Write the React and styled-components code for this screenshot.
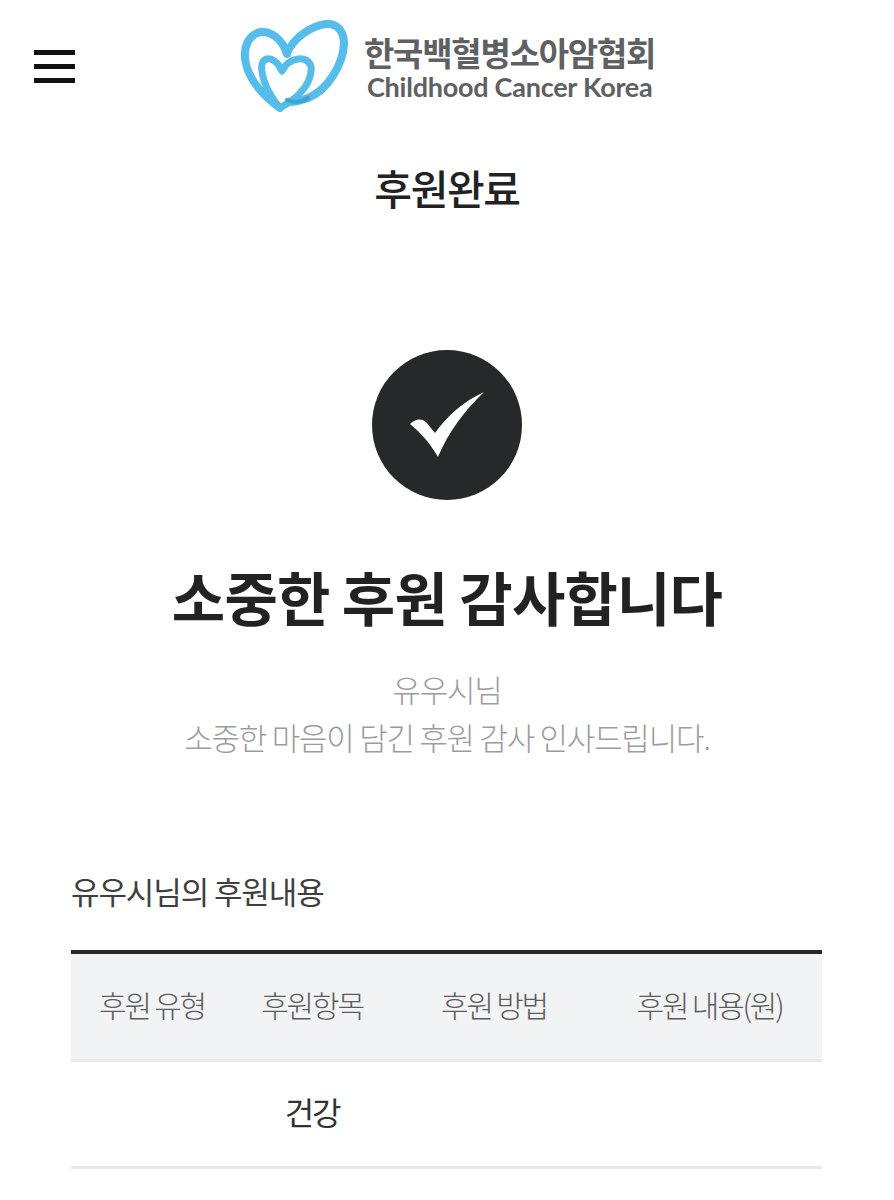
import React from 'react';
import styled, { createGlobalStyle } from 'styled-components';

const GlobalStyle = createGlobalStyle`
  html, body {
    margin: 0;
    padding: 0;
    background: #fff;
  }
  body {
    font-family: "Noto Sans CJK KR", "Noto Sans", sans-serif;
  }
`;

const Page = styled.div`
  width: 894px;
  height: 1200px;
  overflow: hidden;
  background: #fff;
`;

const Header = styled.header`
  display: flex;
  align-items: flex-start;
  height: 157px;
  padding: 20px 0 0 34px;
  box-sizing: border-box;
`;

const Burger = styled.button`
  display: flex;
  flex-direction: column;
  gap: 9px;
  width: 41px;
  margin-top: 30px;
  padding: 0;
  border: 0;
  background: none;
  span {
    display: block;
    height: 5px;
    background: #111;
  }
`;

const Logo = styled.div`
  display: flex;
  align-items: flex-start;
  margin-left: 165px;
`;

const LogoText = styled.div`
  display: flex;
  flex-direction: column;
  margin: 13px 0 0 14px;
  color: #5f6062;
  white-space: nowrap;
`;

const LogoKorean = styled.div`
  font-size: 33px;
  line-height: 38px;
  font-weight: 700;
  letter-spacing: -1.25px;
`;

const LogoEnglish = styled.div`
  margin-left: 3px;
  font-family: "Lato", "Noto Sans", sans-serif;
  font-size: 27px;
  line-height: 32px;
  font-weight: 700;
  letter-spacing: -0.25px;
`;

const PageTitle = styled.h1`
  margin: 0;
  height: 60px;
  text-align: center;
  color: #222;
  font-size: 41px;
  line-height: 60px;
  font-weight: 500;
  letter-spacing: -1.4px;
`;

const Hero = styled.section`
  display: flex;
  flex-direction: column;
  align-items: center;
  padding-top: 133px;
`;

const CheckCircle = styled.div`
  display: flex;
  align-items: center;
  justify-content: center;
  width: 150px;
  height: 150px;
  border-radius: 50%;
  background: #27282a;
`;

const Thanks = styled.h2`
  margin: 55px 0 0;
  color: #222;
  font-size: 58px;
  line-height: 82px;
  font-weight: 700;
  letter-spacing: -0.8px;
`;

const Message = styled.p`
  margin: 28px 0 0;
  text-align: center;
  color: #9c9c9c;
  font-size: 31px;
  line-height: 48px;
  font-weight: 300;
  letter-spacing: -1.25px;
`;

const Section = styled.section`
  padding: 0 72px 0 71px;
  margin-top: 107px;
`;

const SectionTitle = styled.h3`
  margin: 0 0 36px;
  color: #3f3f3f;
  font-size: 31px;
  line-height: 46px;
  font-weight: 400;
  letter-spacing: -1.1px;
`;

const Table = styled.div`
  border-top: 4px solid #27282a;
`;

const Row = styled.div`
  display: grid;
  grid-template-columns: 162px 158px 206px 225px;
  align-items: center;
  height: ${props => props.$height}px;
  padding-bottom: 6px;
  box-sizing: border-box;
  border-bottom: 3px solid #e9e9eb;
  background: ${props => props.$head ? '#f2f3f5' : '#fff'};
`;

const Cell = styled.div`
  text-align: center;
  white-space: nowrap;
  color: ${props => props.$head ? '#5c5c5c' : '#333'};
  font-size: ${props => props.$head ? 30 : 32}px;
  font-weight: ${props => props.$head ? 300 : 400};
  line-height: 40px;
  letter-spacing: -2.2px;
`;

const HeartLogo = () => (
  <svg width="110" height="92" viewBox="0 0 110 92" fill="none">
    <g stroke="#56bdea" strokeLinecap="round" strokeLinejoin="round">
      <path d="M47 34 C42 18 30 11 21 12 C9 14 4 26 5 38 C7 60 26 78 40 88" strokeWidth="8" />
      <path d="M47 33 C54 18 70 6 86 4 C98 3 104 12 104 24 C103 44 88 70 68 78 C62 80 57 82 50 82" strokeWidth="8" />
      <path
        d="M42 51 C38 42 32 38 27 39 C22 40 21 46 22 52 C24 65 32 79 40 88 C47 84 56 78 60 73 C68 65 72 55 71 47 C70 41 64 38 58 39 C50 40 45 45 42 51 Z"
        strokeWidth="7"
      />
    </g>
    <path d="M47 80 C55 83 62 82 68 78" stroke="#3aa5cf" strokeWidth="4" strokeLinecap="round" />
  </svg>
);

const CheckMark = () => (
  <svg width="76" height="68" viewBox="0 0 76 68">
    <path
      d="M1 33 C6 28 12 27 17 31 L26 42 C38 25 55 10 75 1 C57 18 39 41 29 66 C21 52 12 42 1 33 Z"
      fill="#fff"
    />
  </svg>
);

const App = () => (
  <Page>
    <GlobalStyle />
    <Header>
      <Burger aria-label="메뉴">
        <span />
        <span />
        <span />
      </Burger>
      <Logo>
        <HeartLogo />
        <LogoText>
          <LogoKorean>한국백혈병소아암협회</LogoKorean>
          <LogoEnglish>Childhood Cancer Korea</LogoEnglish>
        </LogoText>
      </Logo>
    </Header>
    <PageTitle>후원완료</PageTitle>
    <Hero>
      <CheckCircle>
        <CheckMark />
      </CheckCircle>
      <Thanks>소중한 후원 감사합니다</Thanks>
      <Message>
        유우시님
        <br />
        소중한 마음이 담긴 후원 감사 인사드립니다.
      </Message>
    </Hero>
    <Section>
      <SectionTitle>유우시님의 후원내용</SectionTitle>
      <Table>
        <Row $head $height={108}>
          <Cell $head>후원 유형</Cell>
          <Cell $head>후원항목</Cell>
          <Cell $head>후원 방법</Cell>
          <Cell $head>후원 내용(원)</Cell>
        </Row>
        <Row $height={107}>
          <Cell />
          <Cell>건강</Cell>
          <Cell />
          <Cell />
        </Row>
      </Table>
    </Section>
  </Page>
);

export default App;
